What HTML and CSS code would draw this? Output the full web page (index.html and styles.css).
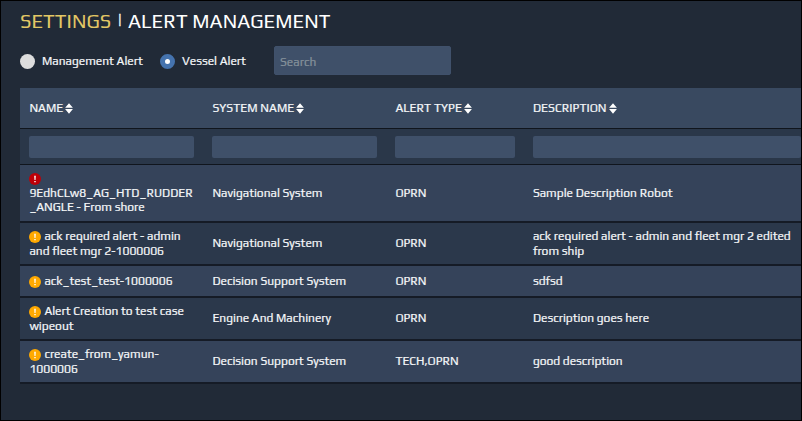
FILE: index.html
```
<!DOCTYPE html>
<html lang="en">
<head>
<meta charset="utf-8">
<title>Alert Management</title>
<link rel="stylesheet" href="styles.css">
</head>
<body>
<svg class="defs" aria-hidden="true">
  <symbol id="sort" viewBox="0 0 8 11"><path d="M4 0.2 L7.9 4.7 H0.1Z M4 10.8 L7.9 6.1 H0.1Z"/></symbol>
  <symbol id="alert" viewBox="0 0 12 12"><circle cx="6" cy="6" r="6"/><path class="mark" d="M5.2 2.8H6.8L6.5 7H5.5ZM5.3 7.9H6.7V9.2H5.3Z"/></symbol>
</svg>
<main class="page">
  <h1><span class="section">SETTINGS</span> <span class="divider">|</span> <span class="title">ALERT MANAGEMENT</span></h1>
  <div class="toolbar">
    <label class="option first"><span class="radio"></span><span class="label">Management Alert</span></label>
    <label class="option second"><span class="radio selected"></span><span class="label">Vessel Alert</span></label>
    <input class="search" type="text" placeholder="Search">
  </div>
  <section class="table">
    <div class="row head">
      <div class="cell">NAME<svg class="sort"><use href="#sort"/></svg></div>
      <div class="cell">SYSTEM NAME<svg class="sort"><use href="#sort"/></svg></div>
      <div class="cell">ALERT TYPE<svg class="sort"><use href="#sort"/></svg></div>
      <div class="cell">DESCRIPTION<svg class="sort"><use href="#sort"/></svg></div>
    </div>
    <div class="row filters">
      <div class="cell"><span class="filter"></span></div>
      <div class="cell"><span class="filter"></span></div>
      <div class="cell"><span class="filter"></span></div>
      <div class="cell last"><span class="filter"></span></div>
    </div>
    <div class="row odd tall">
      <div class="cell"><p><svg class="alert red"><use href="#alert"/></svg><br>9EdhCLw8_AG_HTD_RUDDER<br>_ANGLE - From shore</p></div>
      <div class="cell">Navigational System</div>
      <div class="cell">OPRN</div>
      <div class="cell">Sample Description Robot</div>
    </div>
    <div class="row even">
      <div class="cell"><p><svg class="alert"><use href="#alert"/></svg>ack required alert - admin<br>and fleet mgr 2-1000006</p></div>
      <div class="cell">Navigational System</div>
      <div class="cell">OPRN</div>
      <div class="cell"><p>ack required alert - admin and fleet mgr 2 edited<br>from ship</p></div>
    </div>
    <div class="row odd short">
      <div class="cell"><p><svg class="alert"><use href="#alert"/></svg>ack_test_test-1000006</p></div>
      <div class="cell">Decision Support System</div>
      <div class="cell">OPRN</div>
      <div class="cell">sdfsd</div>
    </div>
    <div class="row even">
      <div class="cell"><p><svg class="alert"><use href="#alert"/></svg>Alert Creation to test case<br>wipeout</p></div>
      <div class="cell">Engine And Machinery</div>
      <div class="cell">OPRN</div>
      <div class="cell">Description goes here</div>
    </div>
    <div class="row odd">
      <div class="cell"><p><svg class="alert"><use href="#alert"/></svg>create_from_yamun-<br>1000006</p></div>
      <div class="cell">Decision Support System</div>
      <div class="cell">TECH,OPRN</div>
      <div class="cell">good description</div>
    </div>
  </section>
</main>
</body>
</html>
```
FILE: styles.css
```
* { box-sizing: border-box; }
body {
  margin: 0;
  background: #212a37;
  color: #f4f6f8;
  font: 12px/14.5px Play, Roboto, sans-serif;
  letter-spacing: -0.03px;
  -webkit-text-stroke: 0.2px;
}
.defs { display: none; }
.page {
  height: 421px;
  border: 1px solid #000;
  padding: 8px 0 0 19px;
  overflow: hidden;
}
h1 {
  display: flex;
  margin: 0;
  height: 24px;
  font-size: 20px;
  font-weight: 400;
  line-height: 24px;
  letter-spacing: 0.05px;
  color: #fff;
  white-space: nowrap;
  -webkit-text-stroke: 0;
}
.section { width: 97px; color: #e2c765; }
.divider { width: 11px; font-size: 17px; line-height: 22px; -webkit-text-stroke: 0.3px; }
.toolbar { display: flex; align-items: center; height: 29px; margin-top: 13px; }
.option { display: flex; align-items: center; white-space: nowrap; }
.first { width: 140px; }
.second { width: 114px; }
.label { padding-top: 2px; }
.radio { width: 15px; height: 15px; margin: 2px 7px 0 0; border-radius: 50%; background: #ddd; }
.selected { border: 5px solid #4573ae; background: #fff; }
.search {
  width: 177px;
  height: 29px;
  padding: 3px 5px 0;
  border: 1px solid #40516b;
  border-radius: 2px;
  background: #3f5069;
  font: inherit;
}
.search::placeholder { color: #84909a; opacity: 1; }
.table { margin-top: 13px; }
.row {
  display: grid;
  grid-template-columns: 183px 183px 137.5px 1fr;
  height: 43px;
  border-bottom: 2px solid #151b26;
}
.cell { display: flex; align-items: center; padding: 0 9px 0 9.4px; min-width: 0; white-space: nowrap; }
.cell p { margin: 0; }
.head { height: 41px; background: #394960; border-bottom: 1px solid #10151d; letter-spacing: 0.03px; }
.filters { height: 36px; background: #2a3749; border-bottom: 1px solid #10151d; }
.tall { height: 58px; }
.short { height: 32px; }
.odd { background: #35435a; }
.even { background: #2b384b; }
.row .last { padding-right: 0; }
.filter { width: 100%; height: 22px; border-radius: 2px; background: #3f5069; }
.sort { width: 8px; height: 11px; margin-left: 2px; fill: #fff; }
.alert { width: 12px; height: 12px; margin-right: 3px; vertical-align: -3px; fill: #ffa900; }
.red { fill: #bd0008; }
.mark { fill: #fff; }
```
